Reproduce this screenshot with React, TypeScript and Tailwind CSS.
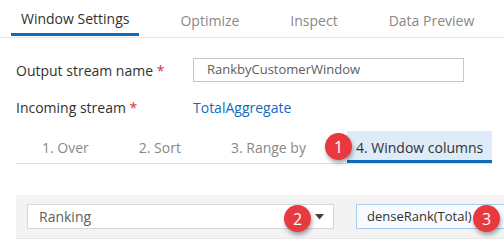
import React from "react";

function Badge({ n, className }: { n: string; className: string }) {
  return (
    <div
      className={
        "absolute flex h-[27px] w-[27px] items-center justify-center rounded-full bg-[#e8393f] text-[16px] leading-none text-white shadow-[1px_3px_4px_rgba(0,0,0,0.35)] " +
        className
      }
    >
      {n}
    </div>
  );
}

export default function App() {
  const topTabs = ["Window Settings", "Optimize", "Inspect", "Data Preview"];
  const subTabs = ["1. Over", "2. Sort", "3. Range by", "4. Window columns"];
  return (
    <div
      className="relative h-[240px] w-[504px] overflow-hidden bg-white text-[#323130]"
      style={{ fontFamily: '"Open Sans", "Noto Sans", sans-serif' }}
    >
      {/* top tabs */}
      <div className="flex h-[38px] gap-[31px] border-b border-[#e6e6e6] pl-[11px]">
        {topTabs.map((t, i) => (
          <div
            key={t}
            className={
              "flex h-[36px] shrink-0 items-center whitespace-nowrap px-[10px] pt-[4px] text-[14px] " +
              (i === 0
                ? "border-b-[3px] border-[#0f6cbd] text-[#323130]"
                : "text-[#8a8886]")
            }
          >
            {t}
          </div>
        ))}
      </div>

      {/* output stream name */}
      <div className="mt-[20px] flex h-[24px] items-center pl-[16px] text-[14px]">
        <div className="w-[177px] shrink-0 whitespace-nowrap">
          Output stream name <span className="text-[#d13438]">*</span>
        </div>
        <div className="flex h-[24px] w-[271px] items-center border border-[#c8c6c4] pl-[13px] text-[13px] text-[#605e5c]">
          RankbyCustomerWindow
        </div>
      </div>

      {/* incoming stream */}
      <div className="mt-[13px] flex h-[24px] items-center pl-[16px] text-[14px]">
        <div className="w-[177px] shrink-0 whitespace-nowrap">
          Incoming stream <span className="text-[#d13438]">*</span>
        </div>
        <div className="text-[#0f6cbd]">TotalAggregate</div>
      </div>

      {/* sub tabs */}
      <div className="ml-[16px] mt-[12px] flex h-[33px] w-[476px] gap-[32px] border-b border-[#e1dfdd] pl-[17px]">
        {subTabs.map((t, i) => (
          <div
            key={t}
            className={
              "flex h-[32px] shrink-0 items-center whitespace-nowrap px-[9px] text-[14px] " +
              (i === 3
                ? "border-b-[3px] border-[#0f6cbd] bg-[#deecf9] pt-[3px] text-[#323130]"
                : "text-[#8a8886]")
            }
          >
            {t}
          </div>
        ))}
      </div>

      {/* bottom panel */}
      <div className="ml-[16px] mt-[31px] flex h-[44px] w-[488px] items-start gap-[22px] border-b border-[#e6e6e6] bg-[#f3f3f3] pl-[11px] pt-[9px]">
        <div className="flex h-[25px] w-[307px] shrink-0 items-center justify-between border border-[#d6d6d6] bg-white pl-[11px] pr-[9px] text-[14px] text-[#605e5c]">
          <span>Ranking</span>
          <svg width="9" height="6" viewBox="0 0 9 6">
            <path d="M0 0 L9 0 L4.5 5.5 Z" fill="#444" />
          </svg>
        </div>
        <div className="flex h-[25px] w-[150px] shrink-0 items-center whitespace-nowrap border border-[#a9cbed] bg-[#f8fbff] pl-[10px] text-[13px] text-[#323130]">
          denseRank(Total)
        </div>
      </div>

      <Badge n="1" className="left-[325px] top-[133px]" />
      <Badge n="2" className="left-[284px] top-[205px]" />
      <Badge n="3" className="left-[473px] top-[205px]" />
    </div>
  );
}
